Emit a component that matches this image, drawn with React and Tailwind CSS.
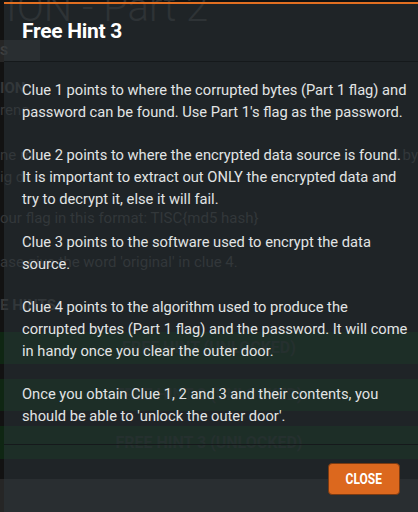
import React from "react";

const ghost = "text-[#383838]";

function Page() {
  return (
    <div className="w-[418px] h-[512px] overflow-hidden bg-[#121212] font-['Roboto',sans-serif] flex flex-col">
      <div className="h-[40px] overflow-hidden flex items-end pl-[6px]">
        <div className={`text-[40px] leading-none font-light text-[#303030] mb-[12px] whitespace-nowrap`}>ION - Part 2</div>
      </div>
      <div className="h-[22px] w-[40px] bg-[#262626] text-[13px] leading-[22px] text-[#3f3f3f] font-bold">S</div>
      <div className="h-[15px]" />
      <div className={`text-[15px] leading-[22px] font-bold ${ghost} whitespace-nowrap`}>ION</div>
      <div className={`text-[15px] leading-[22px] ${ghost} whitespace-nowrap`}>renc</div>
      <div className="h-[23px]" />
      <div className={`text-[15px] leading-[22px] ${ghost} whitespace-nowrap flex justify-between`}>
        <span>ne m</span>
        <span>d by</span>
      </div>
      <div className={`text-[15px] leading-[22px] ${ghost} whitespace-nowrap`}>ig d</div>
      <div className="h-[19px]" />
      <div className={`text-[15px] leading-[22px] ${ghost} whitespace-nowrap`}>our flag in this format: TISC{"{"}md5 hash{"}"}</div>
      <div className="h-[22px]" />
      <div className={`text-[15px] leading-[22px] ${ghost} whitespace-nowrap`}>ase give the word 'original' in clue 4.</div>
      <div className="h-[21px]" />
      <div className={`text-[15px] leading-[22px] font-bold ${ghost} whitespace-nowrap`}>E HINTS</div>
      <div className="h-[16px]" />
      <div className="flex flex-col gap-[15px]">
        <div className="h-[32px] bg-[#0f2613] flex items-center justify-center text-[16px] font-bold text-[#1f2b22] font-['Roboto',sans-serif]">FREE HINT (UNLOCKED)</div>
        <div className="h-[32px] bg-[#0f2613] flex items-center justify-center text-[16px] font-bold text-[#1f2b22] font-['Roboto',sans-serif]">FREE HINT 2 (UNLOCKED)</div>
        <div className="h-[33px] bg-[#0f2613] flex items-center justify-center text-[16px] font-bold text-[#1f2b22] font-['Roboto',sans-serif]">FREE HINT 3 (UNLOCKED)</div>
      </div>
      <div className="h-[20px]" />
      <div className="flex-1 bg-[#262626]" />
    </div>
  );
}

const paragraphs = [
  [
    "Clue 1 points to where the corrupted bytes (Part 1 flag) and",
    "password can be found. Use Part 1's flag as the password.",
  ],
  [
    "Clue 2 points to where the encrypted data source is found.",
    "It is important to extract out ONLY the encrypted data and",
    "try to decrypt it, else it will fail.",
  ],
  ["Clue 3 points to the software used to encrypt the data", "source."],
  [
    "Clue 4 points to the algorithm used to produce the",
    "corrupted bytes (Part 1 flag) and the password. It will come",
    "in handy once you clear the outer door.",
  ],
  [
    "Once you obtain Clue 1, 2 and 3 and their contents, you",
    "should be able to 'unlock the outer door'.",
  ],
];

export default function App() {
  return (
    <div className="relative w-[418px] h-[512px] overflow-hidden">
      <Page />
      <div className="absolute left-[4px] top-[2px] w-[414px] h-[520px] border-t-2 border-[#e26f21] bg-[#2c363c]/50 flex flex-col">
        <div className="h-[58px] border-b border-[#15191b] flex items-center px-[18px] pb-[1px]">
          <h2 className="text-[21px] font-bold text-white font-['Roboto',sans-serif] tracking-[-0.3px]">
            Free Hint 3
          </h2>
        </div>
        <div className="pt-[17px] pb-[17px] pl-[18px] flex flex-col gap-[21px] font-['Roboto',sans-serif] text-[14.7px] leading-[22px] text-[#e2e4e5]">
          {paragraphs.map((lines, i) => (
            <p key={i} className="flex flex-col whitespace-nowrap">
              {lines.map((l, j) => (
                <span key={j}>{l}</span>
              ))}
            </p>
          ))}
        </div>
        <div className="border-t border-[#15191b] pt-[18px] pr-[18px] flex justify-end">
          <button className="w-[72px] h-[32px] rounded-[4px] bg-[#dc681e] border border-[#7a3a12] text-white text-[15px] font-bold font-['Roboto',sans-serif] flex items-center justify-center">
            <span className="inline-block scale-x-[0.8]">CLOSE</span>
          </button>
        </div>
      </div>
    </div>
  );
}
